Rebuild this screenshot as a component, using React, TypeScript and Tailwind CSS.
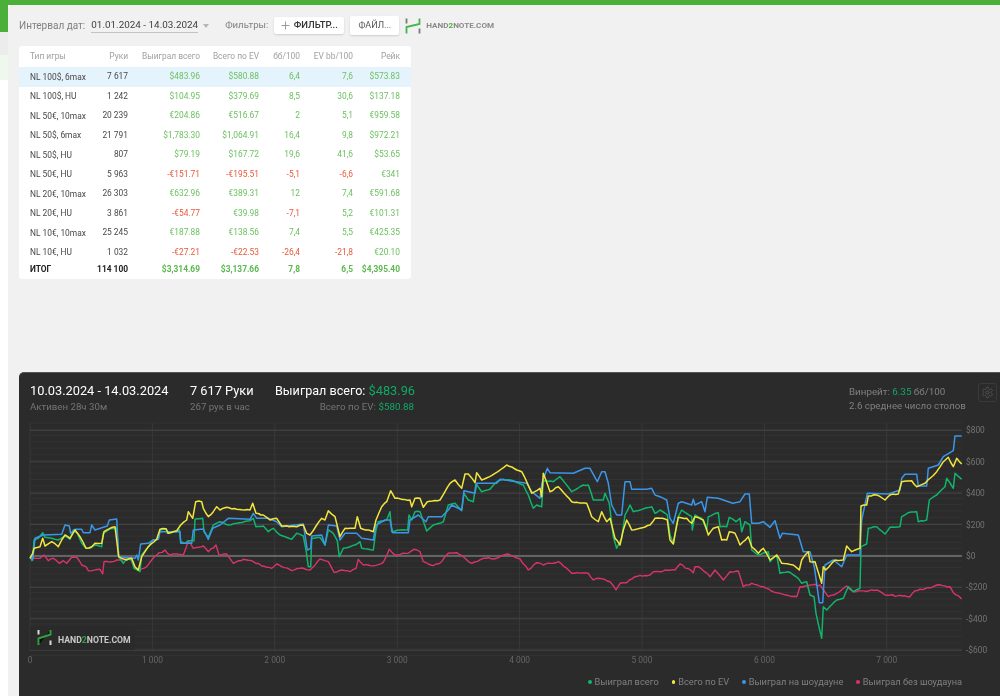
import React from "react";

type P = [number, number];
const RK = '"Roboto","Liberation Sans",sans-serif';

// Traces are sketched in three tiles; each tile maps to page pixels, then to the svg's origin (19, 415).
const tile = (pts: P[], ox: number, oy: number): P[] => pts.map(([x, y]) => [ox + x / 3 - 19, oy + y / 3 - 415]);
const wiggle = (pts: P[], amp: number): P[] => {
  const out: P[] = [];
  let s = 7;
  const rnd = () => {
    s = (s * 9301 + 49297) % 233280;
    return s / 233280 - 0.5;
  };
  pts.forEach((p, i) => {
    out.push(p);
    const n = pts[i + 1];
    if (!n || amp === 0) return;
    const d = n[0] - p[0];
    const c = Math.floor(d / 2.4);
    for (let k = 1; k < c; k++) {
      const t = k / c;
      out.push([p[0] + d * t, p[1] + (n[1] - p[1]) * t + rnd() * amp]);
    }
  });
  return out;
};
const build = (a: P[], b: P[], c: P[], amp: number) =>
  wiggle([...tile(a, 20, 450), ...tile(b, 340, 450), ...tile(c, 660, 420)], amp)
    .map(([x, y]) => `${x.toFixed(1)},${y.toFixed(1)}`)
    .join(" ");

const green = build(
  [[30,320],[36,332],[40,300],[42,270],[55,265],[68,248],[75,262],[95,265],[115,270],[128,262],[135,258],[150,268],[160,240],[172,250],[185,280],[198,295],[210,295],[225,285],[245,290],[250,250],[275,235],[290,235],[296,320],[310,340],[320,325],[335,330],[342,355],[360,365],[365,315],[385,290],[400,270],[415,268],[420,240],[438,238],[442,250],[470,245],[478,240],[482,275],[495,280],[505,272],[522,272],[525,208],[548,205],[552,245],[565,262],[580,225],[600,215],[625,225],[650,220],[690,212],[700,205],[708,230],[730,228],[745,245],[760,235],[780,255],[815,268],[830,250],[850,258],[858,300],[865,350],[872,350],[875,265],[900,262],[915,285],[925,240],[940,250],[952,272],[958,320],[970,295]],
  [[30,290],[45,285],[60,275],[65,295],[100,300],[108,240],[115,215],[140,210],[150,185],[155,245],[180,240],[203,240],[207,195],[215,210],[225,185],[240,185],[260,243],[280,225],[310,215],[325,165],[345,160],[365,182],[372,130],[385,150],[400,155],[408,100],[425,125],[450,118],[470,95],[490,88],[520,92],[550,105],[565,135],[580,175],[590,165],[605,170],[610,92],[640,95],[660,80],[695,125],[730,105],[745,105],[760,150],[790,150],[795,130],[808,160],[820,260],[830,295],[845,265],[855,195],[870,165],[880,185],[935,170],[945,190]],
  [[0,270],[22,285],[30,345],[40,370],[55,290],[65,270],[95,290],[97,330],[105,285],[125,295],[140,330],[145,290],[175,278],[180,320],[200,320],[208,292],[228,305],[240,295],[245,335],[255,305],[270,315],[275,390],[295,405],[325,395],[330,425],[350,405],[360,460],[385,455],[415,475],[425,490],[440,485],[450,525],[462,530],[468,580],[485,655],[490,560],[500,570],[530,540],[550,535],[565,500],[580,515],[600,505],[603,380],[620,372],[625,325],[650,320],[675,342],[690,322],[720,320],[725,290],[745,278],[770,275],[775,305],[800,300],[808,240],[830,225],[855,200],[860,175],[880,205],[885,160],[905,178]],
  0.8
);
const yellow = build(
  [[30,325],[38,310],[42,295],[60,290],[68,265],[75,288],[95,275],[115,290],[125,270],[135,255],[150,265],[165,240],[180,260],[198,295],[215,290],[225,280],[245,280],[252,245],[270,235],[285,230],[296,320],[320,330],[335,325],[345,350],[355,360],[365,320],[385,290],[410,268],[420,238],[438,236],[445,250],[470,242],[482,225],[500,210],[505,185],[518,205],[527,155],[545,155],[550,175],[565,200],[580,185],[590,170],[600,180],[620,172],[650,178],[690,180],[698,160],[708,190],[730,195],[750,210],[770,205],[785,228],[830,230],[850,225],[860,250],[870,255],[890,225],[905,205],[915,210],[925,182],[945,200],[960,260],[975,235]],
  [[30,235],[45,235],[52,200],[62,235],[100,245],[108,210],[125,170],[140,155],[152,122],[165,145],[210,150],[215,170],[225,145],[240,145],[250,172],[262,155],[300,150],[330,100],[345,90],[365,115],[375,72],[385,72],[405,98],[410,68],[425,90],[465,70],[500,45],[530,60],[545,65],[560,95],[575,130],[600,115],[605,140],[610,70],[630,125],[655,110],[695,155],[740,160],[755,200],[775,215],[785,185],[800,215],[810,205],[825,265],[840,285],[850,240],[860,210],[875,240],[900,235],[930,225],[945,205]],
  [[0,295],[22,300],[30,360],[40,372],[55,292],[80,295],[95,310],[105,290],[130,300],[145,345],[160,325],[175,320],[185,360],[200,360],[208,335],[225,340],[240,375],[265,350],[275,380],[295,400],[310,385],[330,420],[350,405],[365,430],[400,435],[418,450],[425,420],[445,395],[450,425],[465,425],[485,490],[490,440],[497,450],[525,420],[550,420],[560,378],[575,395],[600,385],[603,258],[620,255],[625,228],[650,225],[675,240],[690,225],[715,222],[725,185],[755,182],[770,200],[795,190],[810,175],[830,155],[850,125],[865,112],[880,140],[890,115],[905,132]],
  1.2
);
const blue = build(
  [[30,320],[38,330],[45,265],[70,255],[125,253],[135,225],[148,228],[152,250],[165,238],[185,238],[190,248],[210,248],[215,225],[225,240],[262,228],[268,210],[290,207],[296,320],[345,325],[350,315],[355,330],[362,282],[385,280],[400,270],[415,268],[420,245],[480,245],[482,280],[495,280],[515,280],[520,240],[550,237],[565,268],[578,235],[600,225],[625,205],[690,208],[700,190],[710,205],[745,205],[770,215],[785,230],[850,222],[862,300],[872,295],[875,258],[905,255],[915,285],[925,225],[950,228],[960,270],[975,250]],
  [[30,250],[50,250],[65,265],[100,270],[108,225],[135,210],[150,210],[158,248],[205,248],[210,210],[235,195],[258,215],[265,200],[305,200],[325,180],[335,165],[365,180],[372,122],[405,130],[410,100],[470,100],[480,88],[560,100],[575,125],[600,145],[606,100],[622,55],[630,68],[700,70],[735,55],[750,55],[772,95],[785,65],[795,65],[805,100],[815,165],[830,195],[845,195],[855,95],[870,95],[875,118],[920,118],[935,115],[945,135]],
  [[0,230],[20,240],[30,295],[40,310],[55,250],[65,245],[95,255],[100,238],[105,255],[125,245],[135,275],[142,232],[175,235],[218,250],[240,245],[255,222],[268,222],[275,310],[295,310],[310,305],[330,322],[345,302],[360,355],[367,340],[415,345],[430,395],[450,395],[463,440],[478,548],[488,548],[495,435],[520,420],[545,440],[560,405],[600,405],[605,300],[622,220],[685,222],[720,210],[725,175],[735,163],[770,163],[775,198],[800,198],[805,145],[835,135],[850,110],[880,92],[885,48],[905,48]],
  0
);
const pink = build(
  [[30,320],[45,325],[60,325],[72,315],[85,332],[100,325],[118,340],[130,332],[140,340],[155,322],[170,322],[185,345],[198,350],[205,362],[240,358],[248,372],[252,335],[275,335],[298,330],[315,328],[330,322],[345,355],[358,362],[380,350],[395,330],[410,315],[435,300],[450,315],[470,312],[490,315],[505,272],[520,295],[550,288],[565,305],[588,285],[597,315],[620,312],[640,340],[670,328],[700,335],[740,352],[755,355],[770,342],[815,362],[840,355],[870,360],[900,327],[925,335],[942,367],[965,360]],
  [[30,365],[48,355],[55,328],[70,345],[100,347],[130,337],[148,298],[165,315],[205,310],[222,298],[240,305],[250,335],[280,347],[305,335],[325,310],[350,308],[375,325],[395,340],[430,325],[470,325],[505,312],[540,327],[565,360],[590,338],[610,345],[655,335],[695,370],[745,370],[760,390],[775,385],[810,395],[828,420],[840,400],[860,398],[885,380],[930,375],[940,365]],
  [[0,455],[15,450],[45,450],[60,432],[100,458],[105,440],[115,440],[150,470],[165,450],[190,480],[210,455],[235,453],[250,500],[275,490],[310,500],[350,518],[380,525],[410,530],[420,500],[450,495],[480,495],[505,530],[530,520],[560,498],[580,515],[650,510],[675,525],[750,530],[765,512],[820,500],[830,495],[870,500],[880,518],[905,537]],
  1.6
);

const rows: { n: string; h: string; v: string[]; neg?: number[] }[] = [
  { n: "NL 100$, 6max", h: "7 617", v: ["$483.96", "$580.88", "6,4", "7,6", "$573.83"] },
  { n: "NL 100$, HU", h: "1 242", v: ["$104.95", "$379.69", "8,5", "30,6", "$137.18"] },
  { n: "NL 50€, 10max", h: "20 239", v: ["€204.86", "€516.67", "2", "5,1", "€959.58"] },
  { n: "NL 50$, 6max", h: "21 791", v: ["$1,783.30", "$1,064.91", "16,4", "9,8", "$972.21"] },
  { n: "NL 50$, HU", h: "807", v: ["$79.19", "$167.72", "19,6", "41,6", "$53.65"] },
  { n: "NL 50€, HU", h: "5 963", v: ["-€151.71", "-€195.51", "-5,1", "-6,6", "€341"], neg: [0, 1, 2, 3] },
  { n: "NL 20€, 10max", h: "26 303", v: ["€632.96", "€389.31", "12", "7,4", "€591.68"] },
  { n: "NL 20€, HU", h: "3 861", v: ["-€54.77", "€39.98", "-7,1", "5,2", "€101.31"], neg: [0, 2] },
  { n: "NL 10€, 10max", h: "25 245", v: ["€187.88", "€138.56", "7,4", "5,5", "€425.35"] },
  { n: "NL 10€, HU", h: "1 032", v: ["-€27.21", "-€22.53", "-26,4", "-21,8", "€20.10"], neg: [0, 1, 2, 3] },
];

const COLS = "grid grid-cols-[60px_38px_72px_59px_41px_53px_47px] pl-[11px] pr-[11px] items-center";

function Logo({ bar, size }: { bar: string; size: number }) {
  return (
    <svg width={size} height={size} viewBox="0 0 16 16" fill="none" className="shrink-0">
      <path d="M1.5 0.5V5.5M14.5 10.5V15.5" stroke={bar} strokeWidth="1.8" />
      <path d="M14.5 0.5V6L1.5 9V15.5" stroke="#46b54e" strokeWidth="1.8" />
    </svg>
  );
}

function Chart() {
  const xs = [11, 133.4, 255.8, 378.2, 500.6, 623, 745.4, 867.8];
  const minor: number[] = [];
  for (let i = 0; i <= 37; i++) minor.push(8 + i * 6.28);
  const major = [15.4, 46.8, 78.2, 109.6, 141, 172.4, 203.8, 235.2];
  const labels = ["$800", "$600", "$400", "$200", "$0", "-$200", "-$400", "-$600"];
  return (
    <svg width="981" height="255" className="block">
      {minor.map((y) => (
        <line key={y} x1="11" x2="943" y1={y} y2={y} stroke="#333333" />
      ))}
      {xs.map((x) => (
        <line key={x} x1={x} x2={x} y1="8" y2="236" stroke="#393939" />
      ))}
      {major.map((y, i) => (
        <line key={y} x1="11" x2="943" y1={y} y2={y} stroke={i === 4 ? "#777777" : "#444444"} strokeWidth={i === 4 ? 1.3 : 1} />
      ))}
      <rect x="11" y="212" width="105" height="23" fill="#2a2a2a" />
      <polyline points={pink} fill="none" stroke="#d8336c" strokeWidth="1.4" strokeLinejoin="round" />
      <polyline points={green} fill="none" stroke="#0fb56c" strokeWidth="1.5" strokeLinejoin="round" />
      <polyline points={blue} fill="none" stroke="#3a96e8" strokeWidth="1.5" strokeLinejoin="round" />
      <polyline points={yellow} fill="none" stroke="#f2e63c" strokeWidth="1.5" strokeLinejoin="round" />
      {xs.map((x, i) => (
        <text key={x} x={x} y="247.5" textAnchor="middle" fontSize="8.4" fill="#666666" fontFamily={RK}>
          {i === 0 ? "0" : `${i} 000`}
        </text>
      ))}
      {labels.map((l, i) => (
        <text key={l} x="947" y={major[i] + 3} fontSize="8.4" fill="#747474" fontFamily={RK}>
          {l}
        </text>
      ))}
      <g transform="translate(18 214)">
        <path d="M1.5 1V5.5M13.5 11.5V16" stroke="#d8d8d8" strokeWidth="2" />
        <path d="M13.5 1V5.5L1.5 9.5V16" stroke="#2fa03f" strokeWidth="2" />
      </g>
      <text x="39" y="227.5" fontSize="8.7" fontWeight="700" fill="#c9c9c9" fontFamily={RK}>
        HAND<tspan fill="#2fa03f">2</tspan>NOTE.COM
      </text>
    </svg>
  );
}

export default function App() {
  return (
    <div className="relative h-[696px] w-[1000px] overflow-hidden bg-white blur-[0.4px]" style={{ fontFamily: RK }}>
      <div className="h-[5px] bg-[#4caf39]" />
      <div className="flex h-[691px]">
        <div className="flex w-[8px] shrink-0 flex-col">
          <div className="h-[27px] bg-[#4caf39]" />
          <div className="h-[23px] bg-[#ececec]" />
          <div className="h-[25px] bg-[#eef8ec]" />
          <div className="flex-1 bg-white" />
        </div>
        <div className="flex min-w-0 flex-1 flex-col overflow-hidden rounded-tl-[5px] bg-[#f1f1f1]">
          <div className="flex h-[41px] items-center pl-[11px]">
            <span className="text-[10px] text-[#808080]">Интервал дат:</span>
            <span className="ml-[6px] border-b border-[#c4c4c4] pb-px text-[9.9px] leading-[13px] text-[#404040]">01.01.2024 - 14.03.2024</span>
            <span className="ml-[5px] h-0 w-0 border-x-[3.5px] border-t-[4px] border-x-transparent border-t-[#b5b5b5]" />
            <span className="ml-[16px] text-[9.6px] text-[#808080]">Фильтры:</span>
            <div className="ml-[6px] flex h-[17px] w-[70px] items-center justify-center gap-[4px] rounded-[2px] bg-white text-[9.5px] font-medium text-[#333] shadow-[0_1px_2px_rgba(0,0,0,0.15)]">
              <svg width="9" height="9" viewBox="0 0 9 9" stroke="#9a9a9a" strokeWidth="1">
                <path d="M4.5 0.5V8.5M0.5 4.5H8.5" />
              </svg>
              <span>ФИЛЬТР...</span>
            </div>
            <div className="ml-[6px] flex h-[19px] w-[49px] items-center justify-center rounded-[2px] bg-white text-[9px] text-[#555] shadow-[0_1px_2px_rgba(0,0,0,0.15)]">ФАЙЛ...</div>
            <div className="ml-[6px] flex items-center gap-[5px]">
              <Logo bar="#7a7a7a" size={16} />
              <span className="text-[8.1px] font-bold text-[#8a8a8a]">
                HAND<span className="text-[#4caf39]">2</span>NOTE.COM
              </span>
            </div>
          </div>

          <div className="ml-[11px] w-[392px] rounded-[3px] bg-white pb-[2px]">
            <div className={`${COLS} h-[21px] text-[8.4px] text-[#a0a0a0]`}>
              <span>Тип игры</span>
              <span className="text-right">Руки</span>
              <span className="text-right">Выиграл всего</span>
              <span className="text-right">Всего по EV</span>
              <span className="text-right">бб/100</span>
              <span className="text-right">EV bb/100</span>
              <span className="text-right">Рейк</span>
            </div>
            {rows.map((r, i) => (
              <div key={r.n} className={`${COLS} h-[19.5px] text-[8.4px] ${i === 0 ? "bg-[#e5f3fc]" : ""}`}>
                <span className="whitespace-nowrap pt-px text-[#484848]">{r.n}</span>
                <span className="text-right text-[#484848]">{r.h}</span>
                {r.v.map((v, j) => (
                  <span key={j} className={`text-right ${r.neg?.includes(j) ? "text-[#e8593a]" : "text-[#6cc160]"}`}>
                    {v}
                  </span>
                ))}
              </div>
            ))}
            <div className={`${COLS} h-[15px] text-[8.4px] font-bold`}>
              <span className="text-[#222]">ИТОГ</span>
              <span className="text-right text-[#222]">114 100</span>
              {["$3,314.69", "$3,137.66", "7,8", "6,5", "$4,395.40"].map((v) => (
                <span key={v} className="text-right text-[#5cb850]">
                  {v}
                </span>
              ))}
            </div>
          </div>

          <div className="ml-[11px] mt-[93px] flex-1 rounded-tl-[5px] border-t border-[#555] bg-[#2b2b2b]">
            <div className="relative flex h-[42px] items-start pl-[11px] pt-[9px]">
              <div className="w-[160px]">
                <div className="text-[12.8px] leading-[18px] text-white">10.03.2024 - 14.03.2024</div>
                <div className="text-[9.7px] leading-[13px] text-[#747474]">Активен 28ч 30м</div>
              </div>
              <div className="w-[85px]">
                <div className="text-[12.8px] leading-[18px] text-white">7 617 Руки</div>
                <div className="text-[9.7px] leading-[13px] text-[#747474]">267 рук в час</div>
              </div>
              <div className="w-[139px] text-right">
                <div className="whitespace-nowrap text-[12.6px] leading-[18px] text-white">
                  Выиграл всего: <span className="text-[12.8px] text-[#0fa968]">$483.96</span>
                </div>
                <div className="whitespace-nowrap text-[9.8px] leading-[13px] text-[#747474]">
                  Всего по EV: <span className="text-[#0fa968]">$580.88</span>
                </div>
              </div>
              <div className="ml-[435px] w-[125px] whitespace-nowrap pt-[2px]">
                <div className="text-[9.8px] leading-[15px] text-[#808080]">
                  Винрейт: <span className="text-[#0fa968]">6.35</span> бб/100
                </div>
                <div className="text-[9.7px] leading-[14px] text-[#808080]">2.6 среднее число столов</div>
              </div>
              <div className="absolute left-[959px] top-[10px] flex h-[19px] w-[19px] items-center justify-center rounded-[3px] border border-[#3a3a3a]">
                <svg width="13" height="13" viewBox="0 0 24 24" fill="none" stroke="#555" strokeWidth="1.8">
                  <path d="M12.22 2h-.44a2 2 0 0 0-2 2v.18a2 2 0 0 1-1 1.73l-.43.25a2 2 0 0 1-2 0l-.15-.08a2 2 0 0 0-2.73.73l-.22.38a2 2 0 0 0 .73 2.73l.15.1a2 2 0 0 1 1 1.72v.51a2 2 0 0 1-1 1.74l-.15.09a2 2 0 0 0-.73 2.73l.22.38a2 2 0 0 0 2.73.73l.15-.08a2 2 0 0 1 2 0l.43.25a2 2 0 0 1 1 1.73V20a2 2 0 0 0 2 2h.44a2 2 0 0 0 2-2v-.18a2 2 0 0 1 1-1.73l.43-.25a2 2 0 0 1 2 0l.15.08a2 2 0 0 0 2.73-.73l.22-.39a2 2 0 0 0-.73-2.73l-.15-.08a2 2 0 0 1-1-1.74v-.5a2 2 0 0 1 1-1.74l.15-.09a2 2 0 0 0 .73-2.73l-.22-.38a2 2 0 0 0-2.73-.73l-.15.08a2 2 0 0 1-2 0l-.43-.25a2 2 0 0 1-1-1.73V4a2 2 0 0 0-2-2z" />
                  <circle cx="12" cy="12" r="3" />
                </svg>
              </div>
            </div>
            <Chart />
            <div className="flex w-[943px] justify-end gap-[13px] pt-[6px] text-[9.25px] leading-[12px] text-[#808080]">
              {[
                ["Выиграл всего", "bg-[#0fb56c]"],
                ["Всего по EV", "bg-[#f2e63c]"],
                ["Выиграл на шоудауне", "bg-[#3a96e8]"],
                ["Выиграл без шоудауна", "bg-[#d8336c]"],
              ].map(([t, c]) => (
                <span key={t} className="flex items-center gap-[3px] whitespace-nowrap">
                  <span className={`h-[3.5px] w-[3.5px] rounded-full ${c}`} />
                  {t}
                </span>
              ))}
            </div>
          </div>
        </div>
      </div>
    </div>
  );
}
